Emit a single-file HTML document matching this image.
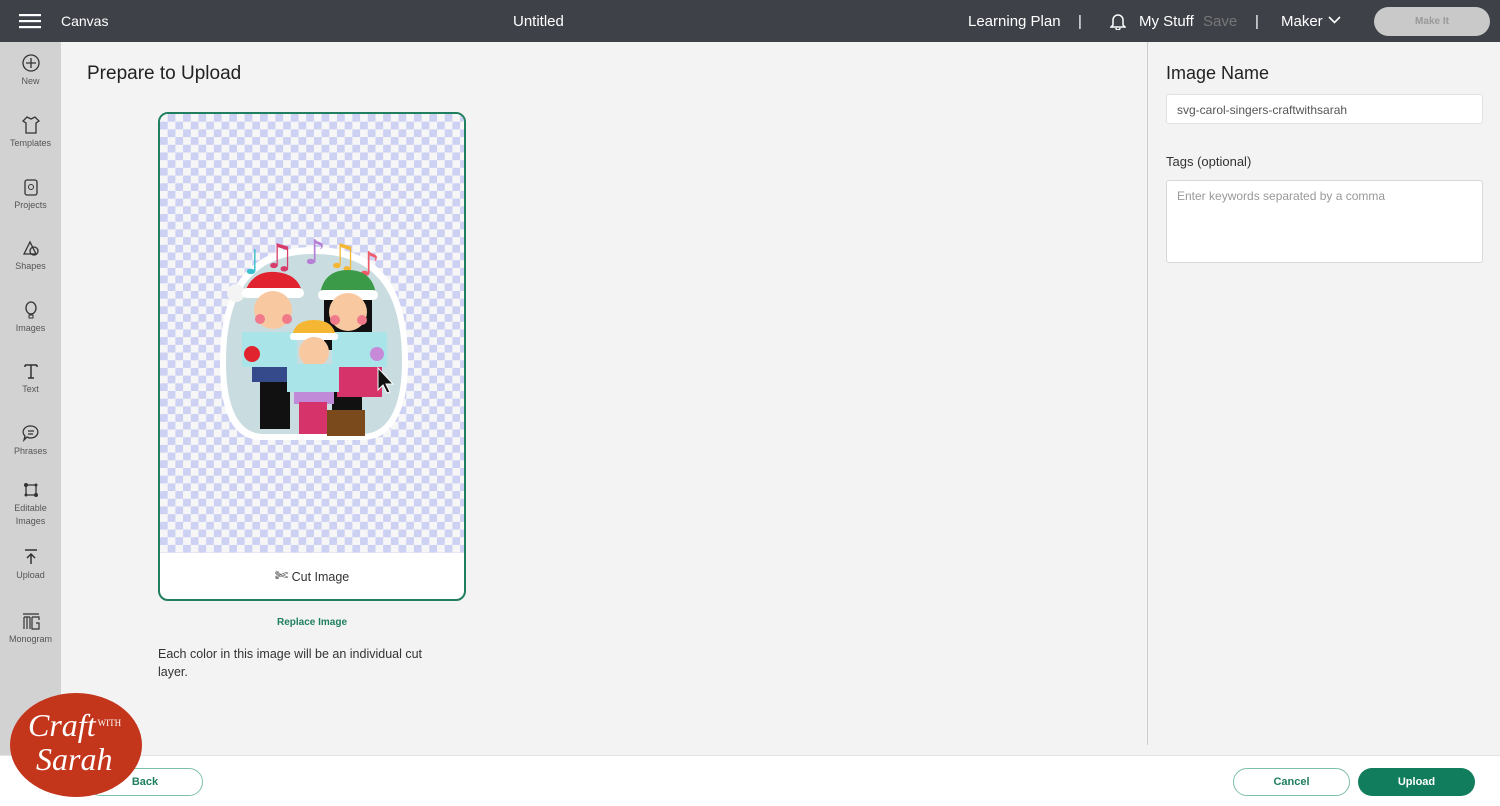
<!DOCTYPE html>
<html><head><meta charset="utf-8"><style>
*{box-sizing:border-box;margin:0;padding:0}
body{width:1500px;height:806px;overflow:hidden;background:#f3f3f3;font-family:"Liberation Sans",sans-serif;position:relative;color:#222}
.top{position:absolute;left:0;top:0;width:1500px;height:42px;background:#3e4148;color:#fff;font-size:15px}
.top span{position:absolute;top:13px}
.side{position:absolute;left:0;top:42px;width:61px;height:764px;background:#d2d2d2}
.si{position:absolute;left:0;width:61px;text-align:center;font-size:9px;color:#555}
.si svg{display:block;margin:0 auto 4px}
.card{position:absolute;left:158px;top:112px;width:308px;height:489px;border:2px solid #1f7f5e;border-radius:10px;overflow:hidden;background:#fff}
.chk{position:absolute;left:0;top:0;width:304px;height:439px;background-color:#f6f6f6;background-image:linear-gradient(45deg,#ccd0f3 25%,transparent 25%,transparent 75%,#ccd0f3 75%),linear-gradient(45deg,#ccd0f3 25%,transparent 25%,transparent 75%,#ccd0f3 75%);background-size:15.4px 15.4px;background-position:0 0,7.7px 7.7px}
.foot{position:absolute;left:0;top:755px;width:1500px;height:51px;background:#fff;border-top:1px solid #e4e4e4}
.btn{position:absolute;height:28px;border-radius:14px;font-size:11px;font-weight:bold;text-align:center;line-height:26px}
</style></head><body>
<div class="top">
<svg style="position:absolute;left:19px;top:14px" width="22" height="15"><rect y="0" width="22" height="2.2" fill="#fff"/><rect y="6" width="22" height="2.2" fill="#fff"/><rect y="12" width="22" height="2.2" fill="#fff"/></svg>
<span style="left:61px;font-size:14px">Canvas</span>
<span style="left:513px">Untitled</span>
<span style="left:968px">Learning Plan</span>
<span style="left:1078px">|</span>
<svg style="position:absolute;left:1110px;top:12px" width="16" height="18" viewBox="0 0 16 18"><path d="M3 13V8a5 5 0 0 1 10 0v5l2 2H1z M6 16a2 2 0 0 0 4 0" fill="none" stroke="#fff" stroke-width="1.5"/></svg>
<span style="left:1139px">My Stuff</span>
<span style="left:1203px;color:#777">Save</span>
<span style="left:1255px">|</span>
<span style="left:1281px">Maker</span>
<svg style="position:absolute;left:1328px;top:16px" width="13" height="8"><path d="M1 1l5.5 5.5L12 1" fill="none" stroke="#fff" stroke-width="1.6"/></svg>
<div style="position:absolute;left:1374px;top:7px;width:116px;height:29px;border-radius:15px;background:#c9c9c9;color:#999;font-size:10px;font-weight:bold;text-align:center;line-height:29px">Make It</div>
</div>
<div class="side">
<div class="si" style="top:12px"><svg width="18" height="18"><circle cx="9" cy="9" r="8" fill="none" stroke="#333" stroke-width="1.3"/><path d="M9 4v10M4 9h10" stroke="#333" stroke-width="1.3"/></svg>New</div>
<div class="si" style="top:74px"><svg width="18" height="18"><path d="M5 1l4 2 4-2 4 4-3 2v10H4V7L1 5z" fill="none" stroke="#333" stroke-width="1.3"/></svg>Templates</div>
<div class="si" style="top:136px"><svg width="18" height="18"><rect x="3" y="2" width="12" height="15" rx="2" fill="none" stroke="#333" stroke-width="1.3"/><circle cx="9" cy="9" r="2.5" fill="none" stroke="#333"/></svg>Projects</div>
<div class="si" style="top:197px"><svg width="18" height="18"><path d="M2 15L8 3l6 12z" fill="none" stroke="#333" stroke-width="1.3"/><circle cx="12" cy="12" r="4" fill="none" stroke="#333" stroke-width="1.3"/></svg>Shapes</div>
<div class="si" style="top:259px"><svg width="18" height="18"><ellipse cx="9" cy="7" rx="5" ry="6" fill="none" stroke="#333" stroke-width="1.3"/><path d="M7 14h4v3H7z" fill="none" stroke="#333"/></svg>Images</div>
<div class="si" style="top:320px"><svg width="18" height="18"><path d="M3 3h12M9 3v13M3 3v2M15 3v2M6 16h6" stroke="#333" stroke-width="1.5" fill="none"/></svg>Text</div>
<div class="si" style="top:382px"><svg width="18" height="18"><path d="M9 2a7 6 0 1 1-4 11l-3 3 1-4A7 6 0 0 1 9 2zM6 7h6M6 10h5" fill="none" stroke="#333" stroke-width="1.3"/></svg>Phrases</div>
<div class="si" style="top:438px;line-height:13px"><svg width="18" height="18"><path d="M4 5h10v10H4z" fill="none" stroke="#333" stroke-width="1.3"/><circle cx="4" cy="5" r="2" fill="#333"/><circle cx="14" cy="15" r="2" fill="#333"/><circle cx="14" cy="5" r="1.5" fill="#333"/><circle cx="4" cy="15" r="1.5" fill="#333"/></svg>Editable<br>Images</div>
<div class="si" style="top:506px"><svg width="18" height="18"><path d="M3 2h12M9 16V6M5 10l4-4 4 4" fill="none" stroke="#333" stroke-width="1.5"/></svg>Upload</div>
<div class="si" style="top:570px"><svg width="20" height="18"><path d="M2 2h16M3 5v12M6 5v12M9 5v12M3 5h6M11 5h7v3M11 5v12h7v-6h-3" fill="none" stroke="#333" stroke-width="1.2"/></svg>Monogram</div>
</div>
<div style="position:absolute;left:87px;top:63px;font-size:19px;color:#222">Prepare to Upload</div>
<div class="card">
<div class="chk"></div>
<svg style="position:absolute;left:0;top:0" width="304" height="439" viewBox="158 112 304 439">
<path d="M218 360 C218 280 250 245 312 245 C374 245 406 280 406 360 C406 410 390 438 360 438 L260 438 C230 438 218 410 218 360Z" fill="#fff"/>
<path d="M224 360 C224 285 254 252 312 252 C370 252 400 285 400 360 C400 405 386 432 360 432 L262 432 C236 432 224 405 224 360Z" fill="#c9dcdf"/>
<g font-size="34" font-family="DejaVu Sans">
<text x="242" y="272" fill="#3bbfcf">♩</text><text x="262" y="266" fill="#d73b6a">♫</text><text x="302" y="262" fill="#b57fd6">♪</text><text x="325" y="266" fill="#f5b733">♫</text><text x="356" y="274" fill="#ef5a6a">♪</text></g>
<circle cx="234" cy="291" r="9" fill="#f4f4f4"/>
<path d="M242 292 Q250 268 274 270 Q296 272 300 290z" fill="#e1232f"/><rect x="240" y="286" width="62" height="10" rx="5" fill="#fff"/>
<circle cx="271" cy="308" r="19" fill="#f8c9a1"/>
<path d="M318 292 Q322 268 346 268 Q370 268 374 292z" fill="#3b9a47"/><rect x="316" y="288" width="60" height="10" rx="5" fill="#fff"/>
<path d="M322 298 h48 v50 h-48z" fill="#111"/>
<circle cx="346" cy="310" r="19" fill="#f8c9a1"/>
<circle cx="258" cy="317" r="5" fill="#f07a8a"/><circle cx="285" cy="317" r="5" fill="#f07a8a"/><circle cx="333" cy="318" r="5" fill="#f07a8a"/><circle cx="360" cy="318" r="5" fill="#f07a8a"/>
<rect x="258" y="377" width="30" height="50" fill="#111"/><rect x="330" y="380" width="30" height="30" fill="#111"/><rect x="325" y="408" width="38" height="26" fill="#7a4a1c"/>
<rect x="250" y="355" width="42" height="25" fill="#344a8a"/><rect x="335" y="355" width="45" height="40" fill="#d6336a"/>
<rect x="240" y="330" width="55" height="35" fill="#a9e4e8"/><rect x="330" y="330" width="55" height="35" fill="#a9e4e8"/>
<circle cx="250" cy="352" r="8" fill="#e1232f"/><circle cx="375" cy="352" r="7" fill="#c68ad8"/>
<path d="M290 335 Q292 318 312 318 Q332 318 334 335z" fill="#f5b733"/><rect x="288" y="331" width="48" height="7" rx="3" fill="#fff"/>
<circle cx="312" cy="350" r="15" fill="#f8c9a1"/>
<rect x="292" y="380" width="40" height="22" fill="#c08ad8"/><rect x="297" y="400" width="28" height="32" fill="#d6336a"/>
<rect x="285" y="362" width="52" height="28" fill="#a9e4e8"/>
<path d="M376 366 v22 l5-5 4 8 3-1-4-8 7 0z" fill="#111" stroke="#fff" stroke-width="1"/>
</svg>
<div style="position:absolute;left:0;top:439px;width:304px;height:48px;text-align:center;line-height:48px;font-size:12.5px;color:#333"><span style="font-size:16px">✄</span> Cut Image</div>
</div>
<div style="position:absolute;left:158px;top:617px;width:308px;text-align:center;font-size:10px;font-weight:bold;color:#1f7f5e">Replace Image</div>
<div style="position:absolute;left:158px;top:645px;width:285px;font-size:12.5px;line-height:18px;color:#333">Each color in this image will be an individual cut layer.</div>
<div style="position:absolute;left:1147px;top:42px;width:1px;height:703px;background:#ccc"></div>
<div style="position:absolute;left:1166px;top:63px;font-size:18px;color:#222">Image Name</div>
<div style="position:absolute;left:1166px;top:94px;width:317px;height:30px;background:#fff;border:1px solid #e2e2e2;border-radius:3px;font-size:12px;color:#555;padding:8px 10px">svg-carol-singers-craftwithsarah</div>
<div style="position:absolute;left:1166px;top:154px;font-size:13px;color:#333">Tags (optional)</div>
<div style="position:absolute;left:1166px;top:180px;width:317px;height:83px;background:#fff;border:1px solid #d8d8d8;border-radius:3px;font-size:12px;color:#999;padding:8px 10px">Enter keywords separated by a comma</div>
<div class="foot">
<div class="btn" style="left:87px;top:12px;width:116px;border:1.5px solid #7fbfa8;color:#1f7f5e">Back</div>
<div class="btn" style="left:1233px;top:12px;width:117px;border:1.5px solid #7fbfa8;color:#1f7f5e">Cancel</div>
<div class="btn" style="left:1358px;top:12px;width:117px;background:#127d5c;color:#fff;line-height:28px">Upload</div>
</div>
<div style="position:absolute;left:10px;top:693px;width:132px;height:104px;border-radius:50%;background:#c4361c"></div>
<div style="position:absolute;left:28px;top:706px;font-family:'Liberation Serif',serif;font-style:italic;color:#fff;font-size:32px;line-height:34px">Craft<span style="font-size:9px;font-style:normal;vertical-align:10px"> WITH</span><br>&nbsp;Sarah</div>
</body></html>
